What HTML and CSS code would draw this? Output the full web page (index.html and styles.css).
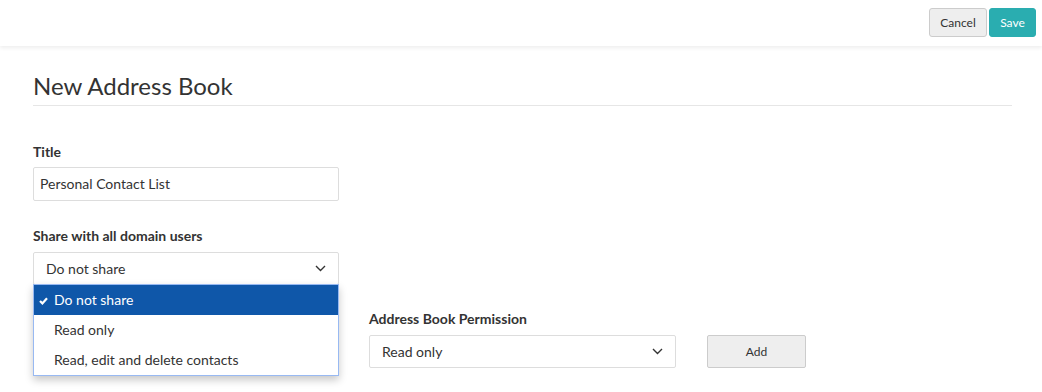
FILE: index.html
```html
<!DOCTYPE html>
<html lang="en">
<head>
  <meta charset="UTF-8">
  <meta name="viewport" content="width=device-width, initial-scale=1.0">
  <title>New Address Book</title>
  <link rel="stylesheet" href="styles.css">
</head>
<body>
  <header class="topbar">
    <button class="btn btn-cancel">Cancel</button>
    <button class="btn btn-primary">Save</button>
  </header>

  <main class="page">
    <h1 class="page-title">New Address Book</h1>

    <div class="field">
      <label class="field-label">Title</label>
      <div class="input">Personal Contact List</div>
    </div>

    <div class="field">
      <label class="field-label">Share with all domain users</label>
      <div class="select-wrap">
        <div class="select">
          <span>Do not share</span>
          <svg class="chevron" width="11" height="7" viewBox="0 0 11 7"><polyline points="1,1 5.5,5.5 10,1" fill="none" stroke="#333" stroke-width="1.4"/></svg>
        </div>
        <ul class="dropdown">
          <li class="selected">
            <svg class="check" width="9" height="8" viewBox="0 0 9 8"><polyline points="1,4 3.4,6.4 8,1.2" fill="none" stroke="#fff" stroke-width="2.2"/></svg>
            Do not share
          </li>
          <li>Read only</li>
          <li>Read, edit and delete contacts</li>
        </ul>
      </div>
    </div>

    <div class="perm-row">
      <div class="perm-spacer"></div>
      <div class="perm-col">
        <label class="field-label">Address Book Permission</label>
        <div class="select select-wide">
          <span>Read only</span>
          <svg class="chevron" width="11" height="7" viewBox="0 0 11 7"><polyline points="1,1 5.5,5.5 10,1" fill="none" stroke="#333" stroke-width="1.4"/></svg>
        </div>
      </div>
      <button class="btn btn-add">Add</button>
    </div>
  </main>
</body>
</html>
```

FILE: styles.css
```css
html, body {
  min-height: 392px;
}
body {
  margin: 0;
  font-family: Lato, "Open Sans", sans-serif;
  color: #333;
  background-color: #fff;
}
.topbar {
  height: 46px;
  display: flex;
  justify-content: flex-end;
  align-items: flex-start;
  gap: 2px;
  padding: 8px 6px 0 0;
  box-sizing: border-box;
  box-shadow: 0 2px 4px rgba(0, 0, 0, 0.07);
}
.btn {
  font-family: Lato, sans-serif;
  font-size: 12px;
  height: 29px;
  padding: 0 9px;
  border: 1px solid #ccc;
  border-radius: 3px;
  background-color: #eee;
  color: #333;
}
.btn-cancel {
  width: 58px;
}
.btn-primary {
  background-color: #2aadb0;
  border-color: #2aadb0;
  color: #fff;
  width: 47px;
}
.page {
  padding: 26px 30px 0 33px;
}
.page-title {
  margin: 0;
  font-size: 24px;
  font-weight: 400;
  line-height: 28px;
  color: #333;
  padding-bottom: 5px;
  border-bottom: 1px solid #e6e6e6;
}
.field {
  margin-top: 36px;
  width: 306px;
}
.field + .field {
  margin-top: 25px;
}
.field-label {
  display: block;
  font-size: 14px;
  font-weight: 700;
  line-height: 20px;
  margin-bottom: 5px;
}
.input, .select {
  box-sizing: border-box;
  height: 34px;
  border: 1px solid #ddd;
  border-radius: 2px;
  font-size: 14px;
  line-height: 32px;
  padding: 0 6px;
}
.select {
  height: 33px;
  line-height: 31px;
  padding: 0 12px;
  display: flex;
  justify-content: space-between;
  align-items: center;
}
.select-wrap {
  position: relative;
  margin-top: 6px;
}
.dropdown {
  position: absolute;
  top: 32px;
  left: 0;
  right: 0;
  margin: 0;
  padding: 0;
  list-style: none;
  background-color: #fff;
  border: 1px solid #98b9f2;
  box-shadow: 0 4px 8px rgba(0, 0, 0, 0.22);
  z-index: 2;
}
.dropdown li {
  height: 30px;
  line-height: 30px;
  font-size: 14px;
  padding-left: 20px;
  position: relative;
}
.dropdown li.selected {
  background-color: #0f57a9;
  color: #fff;
}
.check {
  position: absolute;
  left: 5px;
  top: 12px;
}
.perm-row {
  display: flex;
  align-items: flex-end;
  margin-top: 24px;
}
.perm-spacer {
  width: 336px;
}
.perm-col {
  width: 307px;
}
.perm-col .field-label {
  margin-bottom: 6px;
}
.select-wide {
  width: 307px;
}
.btn-add {
  width: 99px;
  height: 33px;
  margin-left: 31px;
  border-radius: 2px;
}
```
